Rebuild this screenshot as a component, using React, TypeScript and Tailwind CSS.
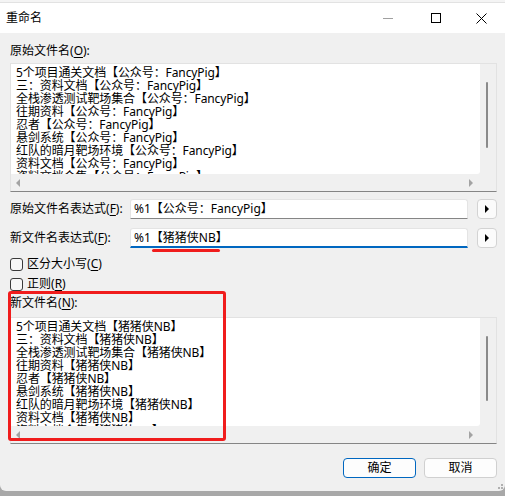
import React from 'react'

const font = "font-['Noto_Sans','Noto_Sans_CJK_SC',sans-serif]"

const oldNames = [
  '5个项目通关文档【公众号：FancyPig】',
  '三：资料文档【公众号：FancyPig】',
  '全栈渗透测试靶场集合【公众号：FancyPig】',
  '往期资料【公众号：FancyPig】',
  '忍者【公众号：FancyPig】',
  '悬剑系统【公众号：FancyPig】',
  '红队的暗月靶场环境【公众号：FancyPig】',
  '资料文档【公众号：FancyPig】',
  '资料文档合集【公众号：FancyPig】',
]

const newNames = oldNames.map((n) => n.replace('公众号：FancyPig', '猪猪侠NB'))

function Key({ k }: { k: string }) {
  return (
    <>
      (<span className="underline underline-offset-2">{k}</span>)
    </>
  )
}

function ListBox({ lines, thumb }: { lines: string[]; thumb: string }) {
  return (
    <div className="grid grid-cols-[1fr_16px] grid-rows-[1fr_17px] h-full border border-[#e2e2e2] border-b-[#858585] bg-[#f0f0f0]">
      <div className="bg-white overflow-hidden rounded-br-[3px] pl-[5px] pt-[2px] text-[12px] leading-[13px] tracking-[-0.1px] text-black whitespace-nowrap">
        {lines.map((l, i) => (
          <div key={i}>{l}</div>
        ))}
      </div>
      <div className="pt-[18px] pl-[6px]">
        <div className={`w-[2px] rounded-full bg-[#8a8a8a] ${thumb}`} />
      </div>
      <div className="flex items-center justify-between pl-[5px] pr-[7px]">
        <span className="w-0 h-0 border-y-[4px] border-y-transparent border-r-[4px] border-r-[#a3a3a3]" />
        <span className="w-0 h-0 border-y-[4px] border-y-transparent border-l-[4px] border-l-[#a3a3a3]" />
      </div>
      <div />
    </div>
  )
}

function ArrowButton() {
  return (
    <button className="w-[20px] h-[20px] flex items-center justify-center rounded-[4px] border border-[#d3d3d3] bg-[#fbfbfb]">
      <span className="w-0 h-0 border-y-[4px] border-y-transparent border-l-[4px] border-l-black" />
    </button>
  )
}

function Check({ children }: { children: React.ReactNode }) {
  return (
    <div className="flex items-center h-[16px] gap-[4px]">
      <span className="w-[13px] h-[13px] rounded-[3px] border border-[#3a3a3a] bg-[#f7f7f7]" />
      <span>{children}</span>
    </div>
  )
}

export default function App() {
  return (
    <div className={`w-[505px] h-[496px] bg-[#a8a8a8] overflow-hidden ${font} text-[12px] text-black`}>
      <div className="h-[3px] bg-[#f4f4f4] border-b border-[#e2e2e2]" />
      <div className="relative h-[488px] bg-[#f0f0f0] rounded-b-[6px] flex flex-col">
        {/* title bar */}
        <div className="h-[30px] bg-white flex items-center">
          <span className="pl-[6px] leading-none">重命名</span>
          <div className="ml-auto flex items-center h-full">
            <div className="w-[46px] flex justify-center">
              <span className="w-[10px] h-px bg-[#a0a0a0] ml-[-4px]" />
            </div>
            <div className="w-[46px] flex justify-center">
              <span className="w-[10px] h-[10px] border border-black ml-[-1px]" />
            </div>
            <div className="w-[46px] flex justify-center">
              <svg width="11" height="11" viewBox="0 0 11 11" className="ml-[-1px]">
                <path d="M0.5 0.5 L10.5 10.5 M10.5 0.5 L0.5 10.5" stroke="black" strokeWidth="1" />
              </svg>
            </div>
          </div>
        </div>

        {/* body */}
        <div className="flex flex-col px-[10px] pr-[8px] pt-[10px]">
          <div className="h-[16px] leading-[16px]">
            原始文件名<Key k="O" />:
          </div>
          <div className="mt-[4px] h-[129px]">
            <ListBox lines={oldNames} thumb="h-[66px]" />
          </div>

          <div className="mt-[7px] flex items-center h-[20px]">
            <span className="w-[120px]">
              原始文件名表达式<Key k="F" />:
            </span>
            <div className="w-[338px] h-[20px] bg-white border border-[#e4e4e4] border-b-[#858585] rounded-t-[3px] pl-[3px] leading-[18px]">
              %1【公众号：FancyPig】
            </div>
            <div className="ml-[9px]">
              <ArrowButton />
            </div>
          </div>

          <div className="mt-[9px] flex items-center h-[20px] relative">
            <span className="w-[120px]">
              新文件名表达式<Key k="F" />:
            </span>
            <div className="w-[338px] h-[20px] bg-white border border-[#e4e4e4] border-b-2 border-b-[#0067c0] rounded-t-[3px] pl-[3px] leading-[18px]">
              %1【猪猪侠NB】
            </div>
            <div className="ml-[9px]">
              <ArrowButton />
            </div>
            <span className="absolute left-[142px] top-[21px] w-[68px] h-[3px] rounded-full bg-[#f01c1c]" />
          </div>

          <div className="mt-[8px]">
            <Check>
              区分大小写<Key k="C" />
            </Check>
          </div>
          <div className="mt-[4px]">
            <Check>
              正则<Key k="R" />
            </Check>
          </div>

          <div className="mt-[3px] h-[16px] leading-[16px]">
            新文件名<Key k="N" />:
          </div>
          <div className="mt-[6px] h-[127px]">
            <ListBox lines={newNames} thumb="h-[65px]" />
          </div>

          <div className="mt-[14px] flex justify-end gap-[8px]">
            <button className="w-[73px] h-[20px] rounded-[4px] border border-[#0067c0] bg-[#fdfdfd] leading-none">
              确定
            </button>
            <button className="w-[73px] h-[20px] rounded-[4px] border border-[#d0d0d0] bg-[#fdfdfd] leading-none">
              取消
            </button>
          </div>
        </div>

        {/* highlight box */}
        <div className="absolute left-[8px] top-[288px] w-[218px] h-[150px] border-[3px] border-[#f01c1c] rounded-[3px]" />

        {/* resize grip */}
        <div className="absolute right-[2px] bottom-[2px] grid grid-cols-2 gap-[1px]">
          <span />
          <span className="w-[2px] h-[2px] bg-[#b0b0b0]" />
          <span className="w-[2px] h-[2px] bg-[#b0b0b0]" />
          <span className="w-[2px] h-[2px] bg-[#b0b0b0]" />
        </div>
      </div>
    </div>
  )
}
